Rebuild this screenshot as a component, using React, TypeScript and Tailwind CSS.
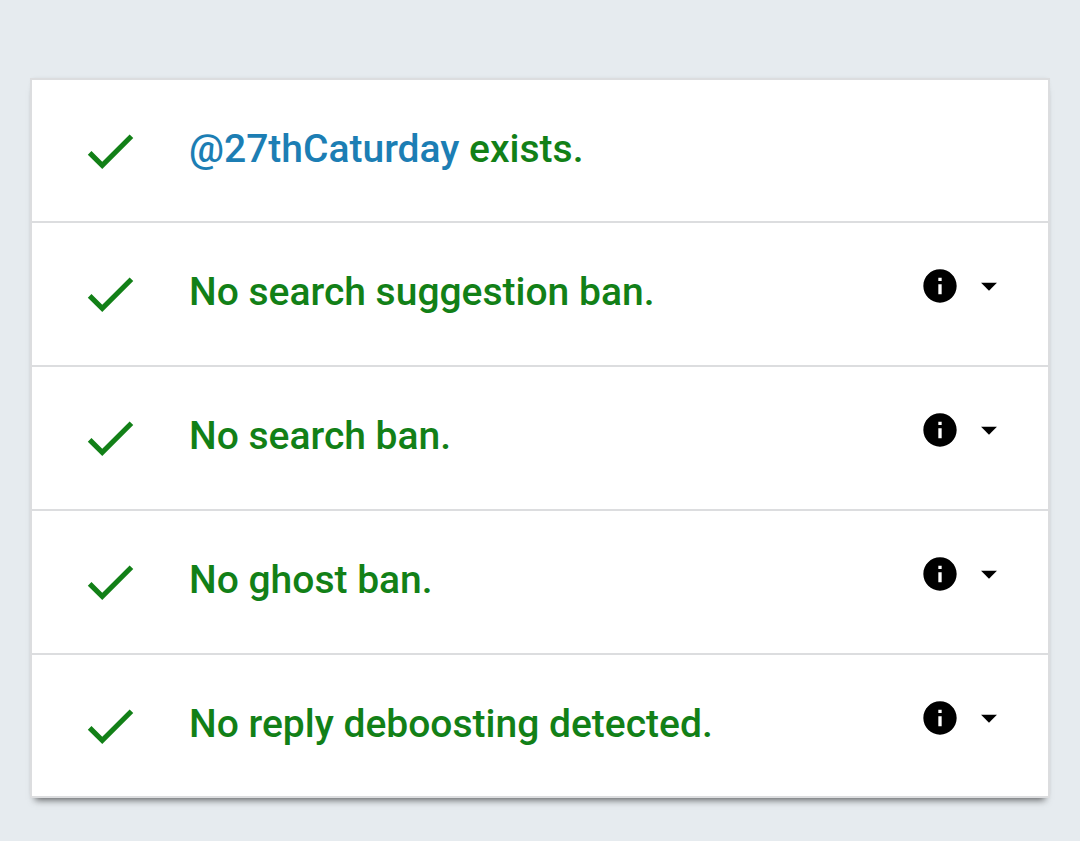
import { MdArrowDropDown, MdCheck, MdInfo } from 'react-icons/md';

interface CheckResult {
  id: string;
  label: string;
}

const results: CheckResult[] = [
  { id: 'suggestion', label: 'No search suggestion ban.' },
  { id: 'search', label: 'No search ban.' },
  { id: 'ghost', label: 'No ghost ban.' },
  { id: 'reply', label: 'No reply deboosting detected.' },
];

export default function App() {
  return (
    <main className="min-h-screen bg-[#e6ebef] px-8 pt-20 pb-11 font-[Roboto,sans-serif] text-[39px] leading-[48px] font-medium text-[#128017]">
      <ul className="divide-y-2 divide-[#dcdddf] bg-white shadow-[0_0_0_2px_#dcdddf,0_7px_7px_-3px_rgba(0,0,0,0.6),0_-1px_4px_0_rgba(0,0,0,0.1)]">
        <li className="flex h-[143px] items-center pl-[47px]">
          <MdCheck className="size-[62px] shrink-0" aria-hidden="true" />
          <p className="ml-12 pb-1">
            <a href="#profile" className="text-[#1c7eb4]">
              @27thCaturday
            </a>{' '}
            exists.
          </p>
        </li>
        {results.map((result) => (
          <li key={result.id} className="flex h-[144px] items-center pr-10 pl-[47px] last:h-[141px]">
            <MdCheck className="size-[62px] shrink-0" aria-hidden="true" />
            <p className="ml-12 flex-1 pb-1">{result.label}</p>
            <button
              type="button"
              className="mb-4 flex items-center gap-[10px] text-black"
              aria-label={`More about: ${result.label}`}
              aria-expanded={false}
            >
              <MdInfo className="size-10" aria-hidden="true" />
              <MdArrowDropDown className="size-[38px]" aria-hidden="true" />
            </button>
          </li>
        ))}
      </ul>
    </main>
  );
}
